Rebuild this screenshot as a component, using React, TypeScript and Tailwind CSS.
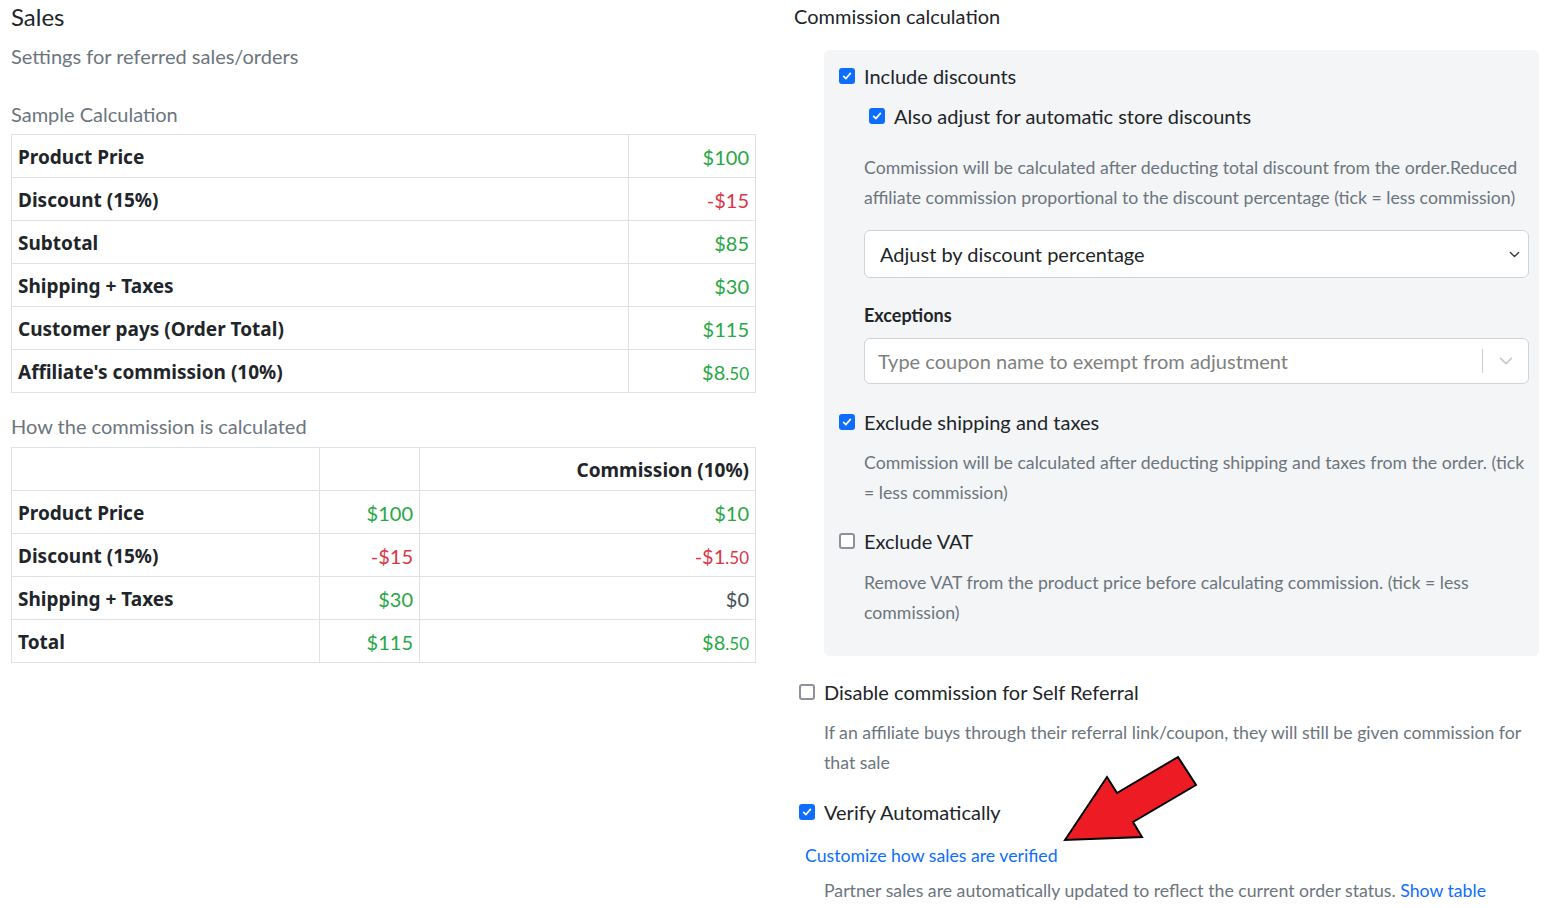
import React from 'react';

const font = { fontFamily: 'Lato, "Noto Sans", sans-serif' };
const boldFont = { fontFamily: '"Noto Sans", Lato, sans-serif' };

const Check = ({ checked }: { checked: boolean }) =>
  checked ? (
    <span className="inline-flex h-[16px] w-[16px] shrink-0 items-center justify-center rounded-[3px] bg-[#0d6efd]">
      <svg viewBox="0 0 16 16" className="h-[12px] w-[12px]">
        <path d="M3.5 8.5l3 3 6-7" fill="none" stroke="#fff" strokeWidth="2.2" strokeLinecap="round" strokeLinejoin="round" />
      </svg>
    </span>
  ) : (
    <span className="inline-block h-[16px] w-[16px] shrink-0 rounded-[3px] border-2 border-[#8f8f9d] bg-white" />
  );

const Money = ({ v, color, small }: { v: string; color: string; small?: string }) => (
  <span className={color}>
    {v}
    {small && <span className="text-[17px]">{small}</span>}
  </span>
);

const CheckRow = ({ checked, label }: { checked: boolean; label: string }) => (
  <label className="flex h-[30px] items-center gap-[9px] whitespace-nowrap text-[20px] text-[#212529]">
    <Check checked={checked} />
    <span>{label}</span>
  </label>
);

const sample = [
  { label: 'Product Price', v: <Money v="$100" color="text-[#28a745]" /> },
  { label: 'Discount (15%)', v: <Money v="-$15" color="text-[#dc3545]" /> },
  { label: 'Subtotal', v: <Money v="$85" color="text-[#28a745]" /> },
  { label: 'Shipping + Taxes', v: <Money v="$30" color="text-[#28a745]" /> },
  { label: 'Customer pays (Order Total)', v: <Money v="$115" color="text-[#28a745]" /> },
  { label: "Affiliate's commission (10%)", v: <Money v="$8" small=".50" color="text-[#28a745]" /> },
];

const howRows = [
  { label: 'Product Price', a: <Money v="$100" color="text-[#28a745]" />, b: <Money v="$10" color="text-[#28a745]" /> },
  { label: 'Discount (15%)', a: <Money v="-$15" color="text-[#dc3545]" />, b: <Money v="-$1" small=".50" color="text-[#dc3545]" /> },
  { label: 'Shipping + Taxes', a: <Money v="$30" color="text-[#28a745]" />, b: <Money v="$0" color="text-[#495057]" /> },
  { label: 'Total', a: <Money v="$115" color="text-[#28a745]" />, b: <Money v="$8" small=".50" color="text-[#28a745]" /> },
];

const td = 'h-[43px] border border-[#dee2e6] px-[6px] pt-[2px] pb-0 text-[20px]';
const th = 'h-[43px] border border-[#dee2e6] px-[6px] pt-[2px] pb-0 text-[19px] font-bold';
const desc = 'whitespace-nowrap text-[17.7px] leading-[30px] text-[#6c757d]';

export default function App() {
  return (
    <div className="relative min-h-[908px] w-[1547px] overflow-hidden bg-white text-[#212529]" style={font}>
      <div className="flex">
        {/* left column */}
        <div className="ml-[11px] w-[745px] shrink-0">
          <h1 className="h-[34px] text-[24px] leading-[34px] text-[#212529]">Sales</h1>
          <p className="mt-[7px] text-[20px] leading-[30px] text-[#6c757d]">Settings for referred sales/orders</p>
          <p className="mt-[28px] text-[20px] leading-[30px] text-[#6c757d]">Sample Calculation</p>
          <table className="mt-[5px] w-full border-collapse">
            <tbody>
              {sample.map((r) => (
                <tr key={r.label}>
                  <td className={th} style={boldFont}>{r.label}</td>
                  <td className={`${td} w-[127px] text-right`}>{r.v}</td>
                </tr>
              ))}
            </tbody>
          </table>
          <p className="mt-[18px] text-[20px] leading-[30px] text-[#6c757d]">How the commission is calculated</p>
          <table className="mt-[6px] w-full border-collapse">
            <tbody>
              <tr>
                <td className={`${td} w-[308px]`}></td>
                <td className={`${td} w-[100px]`}></td>
                <td className={`${th} text-right`} style={boldFont}>Commission (10%)</td>
              </tr>
              {howRows.map((r) => (
                <tr key={r.label}>
                  <td className={th} style={boldFont}>{r.label}</td>
                  <td className={`${td} text-right`}>{r.a}</td>
                  <td className={`${td} text-right`}>{r.b}</td>
                </tr>
              ))}
            </tbody>
          </table>
        </div>

        {/* right column */}
        <div className="ml-[38px] w-[745px] shrink-0">
          <h2 className="mt-[1px] text-[20px] leading-[30px]">Commission calculation</h2>
          <div className="ml-[30px] mt-[19px] rounded-[6px] bg-[#f4f5f7] pb-[28px] pl-[15px] pr-[10px] pt-[11px]">
            <CheckRow checked label="Include discounts" />
            <div className="ml-[30px] mt-[10px]">
              <CheckRow checked label="Also adjust for automatic store discounts" />
            </div>
            <div className="ml-[25px]">
              <p className={`mt-[22px] ${desc}`}>
                Commission will be calculated after deducting total discount from the order.Reduced
                <br />
                affiliate commission proportional to the discount percentage (tick = less commission)
              </p>
              <div className="mt-[17px] flex h-[48px] items-center justify-between rounded-[6px] border border-[#ced4da] bg-white pl-[15px] pr-[8px] text-[20px]">
                <span>Adjust by discount percentage</span>
                <svg viewBox="0 0 16 16" className="h-[11px] w-[11px]">
                  <path d="M2 5l6 6 6-6" fill="none" stroke="#343a40" strokeWidth="2" strokeLinecap="round" strokeLinejoin="round" />
                </svg>
              </div>
              <p className="mt-[23px] text-[18px] font-bold leading-[28px]">Exceptions</p>
              <div className="mt-[9px] flex h-[46px] items-center rounded-[6px] border border-[#ced4da] bg-white pl-[13px] text-[20px]">
                <span className="flex-1 text-[#808080]">Type coupon name to exempt from adjustment</span>
                <span className="h-[24px] w-px bg-[#ccc]" />
                <span className="flex w-[45px] justify-center">
                  <svg viewBox="0 0 20 20" className="h-[18px] w-[18px]">
                    <path d="M4 7l6 6 6-6" fill="none" stroke="#ccc" strokeWidth="2" strokeLinecap="round" strokeLinejoin="round" />
                  </svg>
                </span>
              </div>
            </div>
            <div className="mt-[23px]">
              <CheckRow checked label="Exclude shipping and taxes" />
            </div>
            <p className={`ml-[25px] mt-[11px] ${desc}`}>
              Commission will be calculated after deducting shipping and taxes from the order. (tick
              <br />= less commission)
            </p>
            <div className="mt-[18px]">
              <CheckRow checked={false} label="Exclude VAT" />
            </div>
            <p className={`ml-[25px] mt-[12px] ${desc}`}>
              Remove VAT from the product price before calculating commission. (tick = less
              <br />
              commission)
            </p>
          </div>

          <div className="ml-[5px] mt-[21px]">
            <CheckRow checked={false} label="Disable commission for Self Referral" />
          </div>
          <p className={`ml-[30px] mt-[11px] ${desc}`}>
            If an affiliate buys through their referral link/coupon, they will still be given commission for
            <br />
            that sale
          </p>
          <div className="ml-[5px] mt-[19px]">
            <CheckRow checked label="Verify Automatically" />
          </div>
          <a className="ml-[11px] mt-[14px] block text-[17.7px] leading-[30px] text-[#0d6efd]" href="#">
            Customize how sales are verified
          </a>
          <p className={`ml-[30px] mt-[5px] ${desc}`}>
            Partner sales are automatically updated to reflect the current order status.{' '}
            <a className="text-[#0d6efd]" href="#">Show table</a>
          </p>
        </div>
      </div>

      {/* annotation arrow */}
      <svg className="pointer-events-none absolute left-0 top-0" width="1547" height="908">
        <polygon
          points="1065,840 1107,777 1117,793 1178,757 1196,785 1133,822 1142,837"
          fill="#ed1c24"
          stroke="#000"
          strokeWidth="2"
          strokeLinejoin="miter"
        />
      </svg>
    </div>
  );
}
